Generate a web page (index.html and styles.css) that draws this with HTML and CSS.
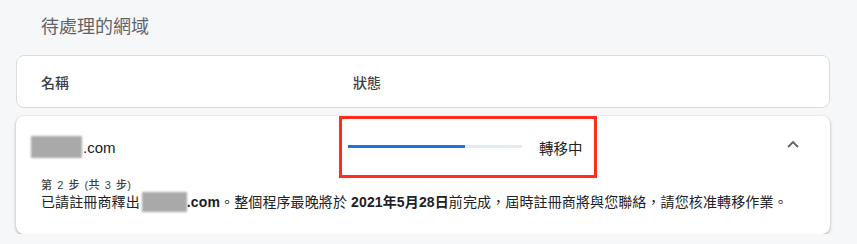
FILE: index.html
```html
<!DOCTYPE html>
<html lang="zh-Hant">
<head>
<meta charset="utf-8">
<title>待處理的網域</title>
<link rel="stylesheet" href="styles.css">
</head>
<body>
<div class="page">
  <h2 class="title">待處理的網域</h2>
  <div class="card header">
    <div class="col-name">名稱</div>
    <div class="col-status">狀態</div>
  </div>
  <div class="card row">
    <div class="row-top">
      <div class="domain"><span class="blur big"></span>.com</div>
      <div class="progress"><div class="fill" style="width:67%"></div></div>
      <div class="status">轉移中</div>
      <div class="chevron">
        <svg width="12" height="8" viewBox="0 0 12 8"><path d="M1 7 L6 2 L11 7" fill="none" stroke="#5f6368" stroke-width="1.8"/></svg>
      </div>
      <div class="annot"></div>
    </div>
    <div class="details">
      <div class="step">第 2 步 (共 3 步)</div>
      <div class="msg">已請註冊商釋出 <span class="blur small"></span><b>.com</b>。整個程序最晚將於 <b>2021年5月28日</b>前完成，屆時註冊商將與您聯絡，請您核准轉移作業。</div>
    </div>
  </div>
</div>
</body>
</html>
```
FILE: styles.css
```css
html, body {
  margin: 0;
  padding: 0;
  background: #f6f7f9;
}
body {
  font-family: "Liberation Sans", "Noto Sans CJK TC", sans-serif;
  color: #3c4043;
}
.page {
  width: 814px;
  margin-left: 16px;
  padding-top: 14px;
}
.title {
  margin: 0 0 0 25px;
  font-size: 18px;
  font-weight: 400;
  line-height: 26px;
  color: #5f6368;
  height: 41px;
}
.card {
  background: #fff;
  border-radius: 8px;
  box-sizing: border-box;
}
.header {
  height: 53px;
  border: 1px solid #dadce0;
  display: flex;
  align-items: center;
  padding-left: 24px;
  font-size: 14px;
  font-weight: 500;
  color: #3c4043;
  margin-bottom: 8px;
}
.col-name { width: 312px; }
.row {
  box-shadow: 0 1px 2px rgba(60,64,67,.3), 0 1px 3px 1px rgba(60,64,67,.12);
  padding-bottom: 22px;
}
.row-top {
  position: relative;
  height: 62px;
  display: flex;
  align-items: center;
  padding-left: 15px;
  padding-right: 31px;
}
.domain {
  width: 317px;
  font-size: 15px;
  display: flex;
  align-items: center;
  color: #202124;
}
.blur {
  display: inline-block;
  background: #a9a9a9;
  filter: blur(0.8px);
  vertical-align: middle;
}
.blur.big { width: 51px; height: 22px; margin-right: 1px; }
.blur.small { width: 45px; height: 20px; vertical-align: -5px; margin-left: -2px; }
.progress {
  width: 174px;
  height: 3px;
  background: #e1ecf8;
  position: relative;
  margin-top: -1px;
}
.fill {
  height: 100%;
  background: #1a73e8;
}
.status {
  margin-left: 17px;
  font-size: 14.5px;
  color: #202124;
  flex: 1;
}
.chevron {
  width: 12px;
  height: 8px;
  display: flex;
  margin-top: -7px;
}
.chevron svg { display: block; }
.annot {
  position: absolute;
  left: 323px;
  top: 0;
  width: 258px;
  height: 62px;
  box-sizing: border-box;
  border: 3px solid #ff2d1f;
}
.details {
  padding-left: 25px;
}
.step {
  font-size: 11px;
  line-height: 14px;
  font-weight: 500;
  color: #3c4043;
  word-spacing: 1.5px;
  letter-spacing: 0.3px;
}
.msg {
  font-size: 14px;
  line-height: 20px;
  color: #202124;
  letter-spacing: 0.12px;
}
.msg b { font-weight: 700; }
```
